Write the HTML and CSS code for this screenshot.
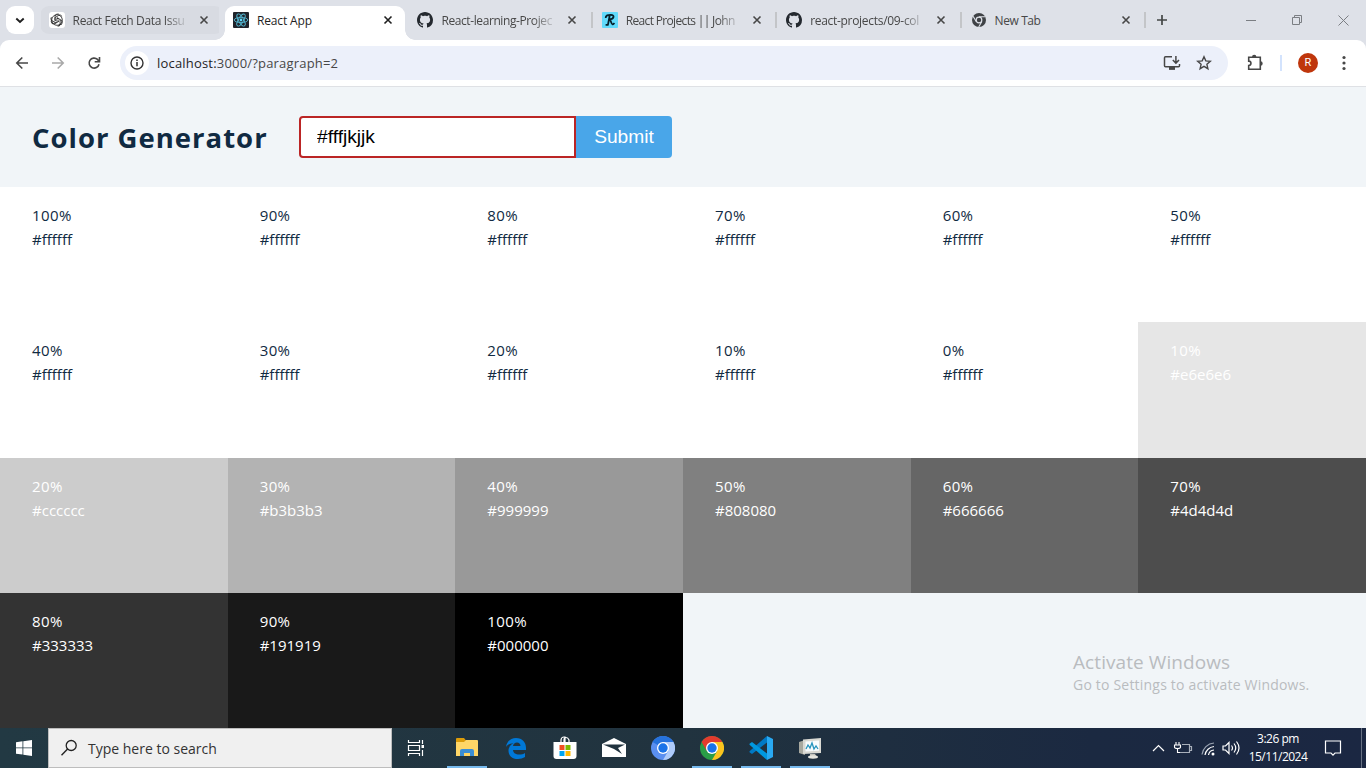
FILE: index.html
```html
<!DOCTYPE html>
<html lang="en">
<head>
<meta charset="utf-8">
<title>React App</title>
<link rel="stylesheet" href="styles.css">
</head>
<body>
<svg class="defs" width="0" height="0">
  <symbol id="x" viewBox="0 0 10 10"><path d="M1.5 1.5l7 7M8.5 1.5l-7 7" fill="none" stroke="currentColor" stroke-width="1.6"/></symbol>
  <symbol id="github" viewBox="0 0 16 16"><path fill="#24292f" d="M8 0C3.58 0 0 3.58 0 8c0 3.54 2.29 6.53 5.47 7.59.4.07.55-.17.55-.38 0-.19-.01-.82-.01-1.49-2.01.37-2.53-.49-2.69-.94-.09-.23-.48-.94-.82-1.13-.28-.15-.68-.52-.01-.53.63-.01 1.08.58 1.23.82.72 1.21 1.87.87 2.33.66.07-.52.28-.87.51-1.07-1.78-.2-3.64-.89-3.64-3.95 0-.87.31-1.59.82-2.15-.08-.2-.36-1.02.08-2.12 0 0 .67-.21 2.2.82.64-.18 1.32-.27 2-.27s1.36.09 2 .27c1.53-1.04 2.2-.82 2.2-.82.44 1.1.16 1.92.08 2.12.51.56.82 1.27.82 2.15 0 3.07-1.87 3.75-3.65 3.95.29.25.54.73.54 1.48 0 1.07-.01 1.93-.01 2.2 0 .21.15.46.55.38A8.01 8.01 0 0 0 16 8c0-4.42-3.58-8-8-8z"/></symbol>
</svg>

<header class="tabstrip">
  <div class="tab-search"><svg width="10" height="7" viewBox="0 0 10 7"><path d="M1.3 1.5L5 5l3.700-3.500" fill="none" stroke="#1f1f1f" stroke-width="1.900"/></svg></div>
  <div class="tab tab-hover">
    <svg class="fav" viewBox="0 0 16 16"><rect width="16" height="16" rx="3" fill="#fff"/><g fill="none" stroke="#333" stroke-width=".9"><path id="petal" d="M6 9.200V4.500a2.600 2.600 0 0 1 4.700-1.400M8 9.200L6 8V5.600l3.600-2.100a2.600 2.600 0 0 1 3.500 1"/><use href="#petal" transform="rotate(120 8 8)"/><use href="#petal" transform="rotate(240 8 8)"/><circle cx="8" cy="8" r="5.300"/></g></svg>
    <span class="title fade t1">React Fetch Data Issu</span><svg class="close"><use href="#x"/></svg>
  </div>
  <div class="tab tab-active">
    <svg class="fav" viewBox="0 0 16 16"><rect width="16" height="16" rx="1" fill="#20232a"/><g fill="none" stroke="#52b6d0" stroke-width=".9"><ellipse cx="8" cy="8" rx="6.800" ry="2.600"/><ellipse cx="8" cy="8" rx="6.800" ry="2.600" transform="rotate(60 8 8)"/><ellipse cx="8" cy="8" rx="6.800" ry="2.600" transform="rotate(120 8 8)"/></g><circle cx="8" cy="8" r="1.400" fill="#61dafb"/></svg>
    <span class="title t2">React App</span><svg class="close"><use href="#x"/></svg>
  </div>
  <div class="tab sep">
    <svg class="fav"><use href="#github"/></svg>
    <span class="title fade t3">React-learning-Projec</span><svg class="close"><use href="#x"/></svg>
  </div>
  <div class="tab sep">
    <svg class="fav" viewBox="0 0 16 16"><rect width="16" height="16" rx="1" fill="#61dafb"/><path d="M3.700 6C3.500 3.500 6 2.700 9 2.800c3.800.1 3.500 4.400-1.800 4.700M7.800 3L6 12.700M8 7.500c1 1.500 1.300 4.600 2.500 4.800 1 .2 1.500-.7 1.600-1.400M3.600 12.800h3" fill="none" stroke="#06202a" stroke-width="1.800"/></svg>
    <span class="title fade t4">React Projects || John</span><svg class="close"><use href="#x"/></svg>
  </div>
  <div class="tab sep">
    <svg class="fav"><use href="#github"/></svg>
    <span class="title fade t5">react-projects/09-col</span><svg class="close"><use href="#x"/></svg>
  </div>
  <div class="tab sep">
    <svg class="fav" viewBox="0 0 16 16"><circle cx="8" cy="8" r="7" fill="#3f4246"/><circle cx="8" cy="8" r="2.800" fill="#3f4246" stroke="#dee1e8" stroke-width="1.200"/><path d="M8 4.800h6.200M5.200 9.600L2.100 4.200M10.800 9.600l-3.100 5.400" stroke="#dee1e8" stroke-width="1.100"/></svg>
    <span class="title t6">New Tab</span><svg class="close"><use href="#x"/></svg>
  </div>
  <svg class="plus" width="12" height="12" viewBox="0 0 12 12"><path d="M6 1v10M1 6h10" stroke="#444746" stroke-width="1.700"/></svg>
  <svg class="winctl" width="106" height="12" viewBox="0 0 106 12" fill="none" stroke="#7b7e83"><path d="M0 6.500h10M48.500 3V1.500h7v7H54M46.500 3.500h7v7h-7zM92.500 1.500l10 10M102.500 1.500l-10 10"/></svg>
</header>

<nav class="toolbar">
  <svg class="nav-icons" width="90" height="16" viewBox="0 0 90 16" fill="none" stroke-width="1.600"><path d="M14 8H3M8.300 2.500L2.800 8l5.500 5.500" stroke="#474747"/><path d="M38 8h11M43.700 2.500L49.200 8l-5.500 5.500" stroke="#a9a9a9"/><path d="M85 9.200a5 5 0 1 1-1.500-4.800l1.500 1.700" stroke="#474747"/><path d="M85.500 2v4.800h-4.800" stroke="#474747"/></svg>
  <div class="omnibox">
    <span class="info"><svg width="14" height="14" viewBox="0 0 14 14"><circle cx="7" cy="7" r="6" fill="none" stroke="#333" stroke-width="1.400"/><path d="M7 6v4.300M7 3.500v1.500" stroke="#333" stroke-width="1.500"/></svg></span>
    <span class="url"><span class="host">localhost:</span>3000/?paragraph=2</span>
    <svg class="install" width="18" height="16" viewBox="0 0 18 16" fill="none" stroke="#474747" stroke-width="1.500"><path d="M9 1.700H2.500q-1 0-1 1v8q0 1 1 1h13q1 0 1-1V9M6 14h6M12.900 1v7M9.800 5l3.100 3.100L16 5"/><path d="M6 12h6v2.500H6z" fill="#474747" stroke="none"/></svg>
    <svg class="star" width="16" height="16" viewBox="0 0 16 16"><path d="M8 1.800l1.800 4.100 4.500.4-3.400 3 1 4.400L8 11.400l-3.900 2.300 1-4.400-3.400-3 4.500-.4z" fill="none" stroke="#474747" stroke-width="1.400"/></svg>
  </div>
  <svg class="puzzle" width="18" height="18" viewBox="0 0 18 18"><path d="M2.700 3.200h11.600v12.100H2.700v-3.700a2.200 2.200 0 0 0 0-4.500z" fill="none" stroke="#474747" stroke-width="1.600"/><path d="M6 3a2.200 2.200 0 0 1 4.400 0zM14.500 7.300a2.200 2.200 0 0 1 0 4.400z" fill="#474747"/></svg>
  <span class="divider"></span>
  <span class="avatar">R</span>
  <svg class="dots" width="4" height="16" viewBox="0 0 4 16" fill="#474747"><circle cx="2" cy="2.500" r="1.600"/><circle cx="2" cy="8" r="1.600"/><circle cx="2" cy="13.500" r="1.600"/></svg>
</nav>

<main class="page">
  <section class="generator">
    <h1>Color Generator</h1>
    <form class="form"><input class="field" type="text" value="#fffjkjjk"><button class="submit" type="button">Submit</button></form>
  </section>
  <section class="colors">
    <article class="color"><p class="percent">100%</p><p>#ffffff</p></article>
    <article class="color"><p class="percent">90%</p><p>#ffffff</p></article>
    <article class="color"><p class="percent">80%</p><p>#ffffff</p></article>
    <article class="color"><p class="percent">70%</p><p>#ffffff</p></article>
    <article class="color"><p class="percent">60%</p><p>#ffffff</p></article>
    <article class="color"><p class="percent">50%</p><p>#ffffff</p></article>
    <article class="color"><p class="percent">40%</p><p>#ffffff</p></article>
    <article class="color"><p class="percent">30%</p><p>#ffffff</p></article>
    <article class="color"><p class="percent">20%</p><p>#ffffff</p></article>
    <article class="color"><p class="percent">10%</p><p>#ffffff</p></article>
    <article class="color"><p class="percent">0%</p><p>#ffffff</p></article>
    <article class="color light" style="background:#e6e6e6"><p class="percent">10%</p><p>#e6e6e6</p></article>
    <article class="color light" style="background:#cccccc"><p class="percent">20%</p><p>#cccccc</p></article>
    <article class="color light" style="background:#b3b3b3"><p class="percent">30%</p><p>#b3b3b3</p></article>
    <article class="color light" style="background:#999999"><p class="percent">40%</p><p>#999999</p></article>
    <article class="color light" style="background:#808080"><p class="percent">50%</p><p>#808080</p></article>
    <article class="color light" style="background:#666666"><p class="percent">60%</p><p>#666666</p></article>
    <article class="color light" style="background:#4d4d4d"><p class="percent">70%</p><p>#4d4d4d</p></article>
    <article class="color light" style="background:#333333"><p class="percent">80%</p><p>#333333</p></article>
    <article class="color light" style="background:#191919"><p class="percent">90%</p><p>#191919</p></article>
    <article class="color light" style="background:#000000"><p class="percent">100%</p><p>#000000</p></article>
  </section>
  <aside class="activate"><p class="act-title">Activate Windows</p><p class="act-sub">Go to Settings to activate Windows.</p></aside>
</main>

<footer class="taskbar">
  <div class="start"><svg width="16" height="16" viewBox="0 0 16 16" fill="#fff"><path d="M0 2.200l6.500-.9v6.200H0zM7.300 1.200L16 0v7.500H7.300zM0 8.300h6.500v6.300L0 13.700zM7.300 8.300H16V16l-8.700-1.200z"/></svg></div>
  <div class="search"><svg width="18" height="18" viewBox="0 0 18 18"><circle cx="11.200" cy="6.500" r="5" fill="none" stroke="#222" stroke-width="1.300"/><path d="M7.600 10L1.500 16.200" stroke="#222" stroke-width="1.400"/></svg><span>Type here to search</span></div>
  <div class="app taskview"><svg width="24" height="24" viewBox="0 0 24 24" fill="none" stroke="#fff"><path d="M4.500 4v2.500h11V4M4.500 20v-2.500h11V20M4.500 9.500h11v5h-11zM18.500 4v4M18.500 14v6" stroke-width="1.200"/><path d="M17.500 9h2.500v3h-2.500z" fill="#fff" stroke="none"/></svg></div>
  <div class="app open"><svg width="24" height="24" viewBox="0 0 24 24"><path d="M1 3q0-1 1-1h7l2 2.500h11V8H1z" fill="#dc9c0a"/><path d="M1 6h8l2-2h11q1 0 1 1v15H1z" fill="#ffd667"/><path d="M5 20v-5q0-2 2-2h10q2 0 2 2v5h-4v-3H9v3z" fill="#3b8ed5"/></svg></div>
  <div class="app"><svg width="24" height="24" viewBox="0 0 24 24"><path d="M2 11C3 5 7 2 12 2c6.500 0 10 4.500 10 10v2H9c.2 3 2.800 4.500 6 4.500 2.500 0 4.500-.7 6-1.600v4.200c-2 1.300-4.500 1.900-7 1.900-6 0-9.500-3.600-9.500-8.300 0-3.200 1.800-6 5-7.500C6 7.400 4 8.500 2 11zm7-1h7.500C16.400 7.800 15 6.600 13 6.600c-2.200 0-3.600 1.400-4 3.400z" fill="#0078d7"/></svg></div>
  <div class="app"><svg width="24" height="24" viewBox="0 0 24 24"><path d="M8 6V4a3 3 0 0 1 3-3h1v5M11 6V4q0-2.500 2-2.500T16 4v2" fill="none" stroke="#fff" stroke-width="1.200"/><path d="M.500 6h23v14q0 3-3 3h-17q-3 0-3-3z" fill="#fff"/><path fill="#f25022" d="M6.500 9h5v5h-5z"/><path fill="#7fba00" d="M12.500 9h5v5h-5z"/><path fill="#00a4ef" d="M6.500 15h5v5h-5z"/><path fill="#ffb900" d="M12.500 15h5v5h-5z"/></svg></div>
  <div class="app"><svg width="24" height="24" viewBox="0 0 24 24"><path d="M0 8l12-6 12 6v13H0z" fill="#fff"/><path d="M1 8.500h22l-7 3.500 4 6-8-5z" fill="#21333f"/></svg></div>
  <div class="app"><svg width="24" height="24" viewBox="0 0 24 24"><circle cx="12" cy="12" r="12" fill="#5a8ff0"/><path d="M12 12L1.600 6A12 12 0 0 1 22.400 6z" fill="#2672dc"/><path d="M12 6h10.400A12 12 0 0 1 12 24l5.200-9z" fill="#aecbfa"/><circle cx="12" cy="12" r="6" fill="#fff"/><circle cx="12" cy="12" r="4.700" fill="#1a73e8"/></svg></div>
  <div class="app open"><svg width="24" height="24" viewBox="0 0 24 24"><circle cx="12" cy="12" r="12" fill="#2a9d46"/><path d="M12 6h10.400A12 12 0 0 1 12 24l5.200-9z" fill="#fcc31e"/><path d="M1.600 6A12 12 0 0 1 22.400 6H12v6l-5.200 3z" fill="#e33b2e"/><circle cx="12" cy="12" r="6" fill="#fff"/><circle cx="12" cy="12" r="4.700" fill="#1a73e8"/></svg></div>
  <div class="app open"><svg width="24" height="24" viewBox="0 0 24 24"><path d="M18 6.500L3 18l-2.500-1.700v-1L18 0z" fill="#0079c5"/><path d="M18 17.500L3 6 .500 7.700v1L18 24z" fill="#0098e0"/><path d="M18 0l6 3v18l-6 3z" fill="#29a9f2"/></svg></div>
  <div class="app open"><svg width="24" height="24" viewBox="0 0 24 24"><path d="M1 6l6-2v15l-6-2z" fill="#a7a89f"/><path d="M5 3.500L23 2v15L5 18z" fill="#d9d9d3"/><path d="M7.500 5.500L21 4.500v10.300L7.500 15.500z" fill="#f8fbfd"/><path d="M8 13l2-4 2 3 2-5 2 6 2-3 2 3" fill="none" stroke="#2794bd" stroke-width="1.300"/><path d="M12 18h5l2 3h-7z" fill="#c3c3bd"/><ellipse cx="15" cy="21" rx="5" ry="1.700" fill="#e5e5df"/></svg></div>
  <div class="tray">
    <svg width="90" height="20" viewBox="0 0 90 20" fill="none" stroke="#fff" stroke-width="1.200"><path d="M1 13l5.500-5.500L12 13"/><path d="M30 6.500h7.500v8H27M38 8.500h1.500v4H38" stroke="#a9b0bb"/><path d="M24 4v3M27 4v3M22.500 7h6v2q0 1.500-3 1.500t-3-1.500zM25.500 10.500v4H28" stroke-width="1.100"/><path d="M50 16.500A13 13 0 0 1 62 5" stroke="#9ba5b3"/><path d="M53 17a10 10 0 0 1 9-8.500M56.500 17a6 6 0 0 1 5.500-5"/><circle cx="61" cy="16" r="1.500" fill="#fff" stroke="none"/><path d="M71 8h2.500L77 4.500v11L73.500 12H71zM79.500 7.500q2 2.500 0 5M82 5.500q3.500 4.500 0 9M84.500 3.500q5 6.500 0 13"/></svg>
    <div class="clock"><p class="time">3:26 pm</p><p class="date">15/11/2024</p></div>
    <svg class="notify" width="18" height="18" viewBox="0 0 18 18"><path d="M1.500 2h15v12H11l-2 2.200L7 14H1.500z" fill="none" stroke="#fff" stroke-width="1.200"/></svg>
    <span class="peek"></span>
  </div>
</footer>
</body>
</html>
```
FILE: styles.css
```css
* { box-sizing: border-box; }
body { margin: 0; width: 1366px; height: 768px; overflow: hidden; display: flex; flex-direction: column; font-family: "Open Sans", "Noto Sans", sans-serif; font-variant-ligatures: none; background: #dee1e8; }
p, h1 { margin: 0; }
svg { display: block; flex: none; }
.defs { position: absolute; }

/* browser tab strip */
.tabstrip { height: 40px; flex: none; display: flex; align-items: center; background: #dee1e8; }
.tab-search { width: 28px; height: 28px; margin: 0 5.6px 0 6px; border-radius: 9px; background: #fff; display: flex; align-items: center; justify-content: center; flex: none; }
.tab { width: 184.4px; flex: none; display: flex; align-items: center; padding-left: 9px; position: relative; color: #474747; height: 28px; font-size: 12px; }
.tab-hover { background: linear-gradient(#d8dbe2, #d8dbe2) 1px 0 / 178px 28px no-repeat; border-radius: 9px; }
.tab-active { align-self: flex-end; height: 34px; padding-bottom: 6px; color: #1f1f1f; }
.tab-active::before { content: ""; position: absolute; left: 1px; top: 0; width: 180px; height: 34px; border-radius: 9px 9px 0 0; background: #fff; }
.tab-active::after { content: ""; position: absolute; left: -9px; bottom: 0; width: 200px; height: 10px; background: radial-gradient(circle at 0 0, transparent 9.500px, #fff 10px) 0 0 / 10px 10px no-repeat, radial-gradient(circle at 100% 0, transparent 9.500px, #fff 10px) 100% 0 / 10px 10px no-repeat; }
.tab-active > * { position: relative; z-index: 1; }
.sep::after { content: ""; position: absolute; right: 0; top: 6px; width: 2px; height: 16px; background: #c3c5c8; }
.fav { width: 16px; height: 16px; margin-right: 8px; }
.title { width: 116px; white-space: nowrap; line-height: 18px; padding-top: 1px; }
.fade { -webkit-mask-image: linear-gradient(90deg, #000 92px, transparent 116px); mask-image: linear-gradient(90deg, #000 92px, transparent 116px); }
.t1 { letter-spacing: -.33px; }
.t2 { letter-spacing: -.15px; }
.t3 { letter-spacing: -.4px; }
.t4 { letter-spacing: -.66px; }
.t5 { letter-spacing: -.3px; }
.t6 { letter-spacing: -.4px; }
.close { width: 10px; height: 10px; margin-left: 10px; }
.plus { margin-left: 9.6px; }
.winctl { margin-left: 78.8px; }

/* browser toolbar */
.toolbar { height: 47px; flex: none; display: flex; align-items: center; background: #fff; border-bottom: 1px solid #dfe1e5; border-radius: 9px 9px 0 0; padding-left: 14px; }
.omnibox { width: 1108px; height: 34px; margin-left: 16px; border-radius: 17px; background: #ecf0fa; display: flex; align-items: center; padding-left: 5px; }
.info { width: 24px; height: 24px; border-radius: 12px; background: #fff; display: flex; align-items: center; justify-content: center; }
.url { margin-left: 8px; font-size: 13px; letter-spacing: .19px; color: #474747; flex: 1; }
.host { color: #1f1f1f; }
.install { margin-right: 15px; }
.star { margin-right: 16px; }
.puzzle { margin-left: 18px; }
.divider { width: 2px; height: 16px; background: #d3e3fd; margin-left: 16px; }
.avatar { width: 20px; height: 20px; margin-left: 16px; border-radius: 50%; background: #bf360c; color: #fff; font: 11px/20px Roboto, sans-serif; text-align: center; }
.dots { margin-left: 24px; }

/* page content */
.page { flex: 1; display: flex; flex-direction: column; background: #f1f5f8; position: relative; }
.generator { height: 100px; flex: none; display: flex; align-items: center; padding-left: 32px; }
h1 { width: 267px; font-size: 27.500px; line-height: 36px; letter-spacing: 1px; color: #102a42; white-space: nowrap; padding-top: 2px; }
.form { display: flex; height: 42px; }
.field { width: 277px; height: 42px; padding: 0 16px 1px; border: 2px solid #bb2525; border-radius: 4px 0 0 4px; background: #fff; color: #000; font: 19.200px "Liberation Sans", Arial, sans-serif; outline: 0; }
.submit { width: 96px; height: 42px; padding: 0 0 1px; border: 0; border-radius: 0 4px 4px 0; background: #49a6e9; color: #fff; font: 19.200px "Liberation Sans", Arial, sans-serif; }
.colors { flex: 1; display: grid; grid-template-columns: repeat(6, 1fr); grid-template-rows: repeat(4, 1fr); }
.color { background: #fff; color: #102a42; padding: 16px 32px 0; font-size: 15px; line-height: 24px; }
.light { color: #fff; }
.percent { letter-spacing: .4px; }
.activate { position: absolute; left: 1073px; top: 561px; color: #b9bcbf; white-space: nowrap; }
.act-title { font-size: 19px; line-height: 28px; letter-spacing: .08px; }
.act-sub { font-size: 14px; line-height: 18px; letter-spacing: .2px; }

/* taskbar */
.taskbar { height: 40px; flex: none; display: flex; align-items: center; background: linear-gradient(90deg, #223943, #21333f 50%, #1b2941 80%, #1b2742); color: #fff; }
.start { width: 48px; display: flex; justify-content: center; }
.search { width: 344px; height: 40px; background: #f0f0f0; border: 1px solid #bdbdbd; color: #333; font-size: 14px; display: flex; align-items: center; padding-left: 11px; }
.search span { margin-left: 10px; }
.app { width: 49px; height: 40px; flex: none; display: flex; align-items: center; justify-content: center; position: relative; }
.taskview { width: 50px; padding-right: 3px; }
.open::after { content: ""; position: absolute; left: 5px; bottom: 0; width: 40px; height: 2px; background: #76b9ed; }
.tray { flex: 1; display: flex; align-items: center; height: 40px; justify-content: flex-end; }
.clock { width: 60px; margin-left: 6px; text-align: center; font-size: 12px; line-height: 18px; white-space: nowrap; letter-spacing: -.5px; }
.notify { margin-left: 16px; }
.peek { width: 1px; height: 40px; background: #677183; margin: 0 4px 0 19px; }
```
